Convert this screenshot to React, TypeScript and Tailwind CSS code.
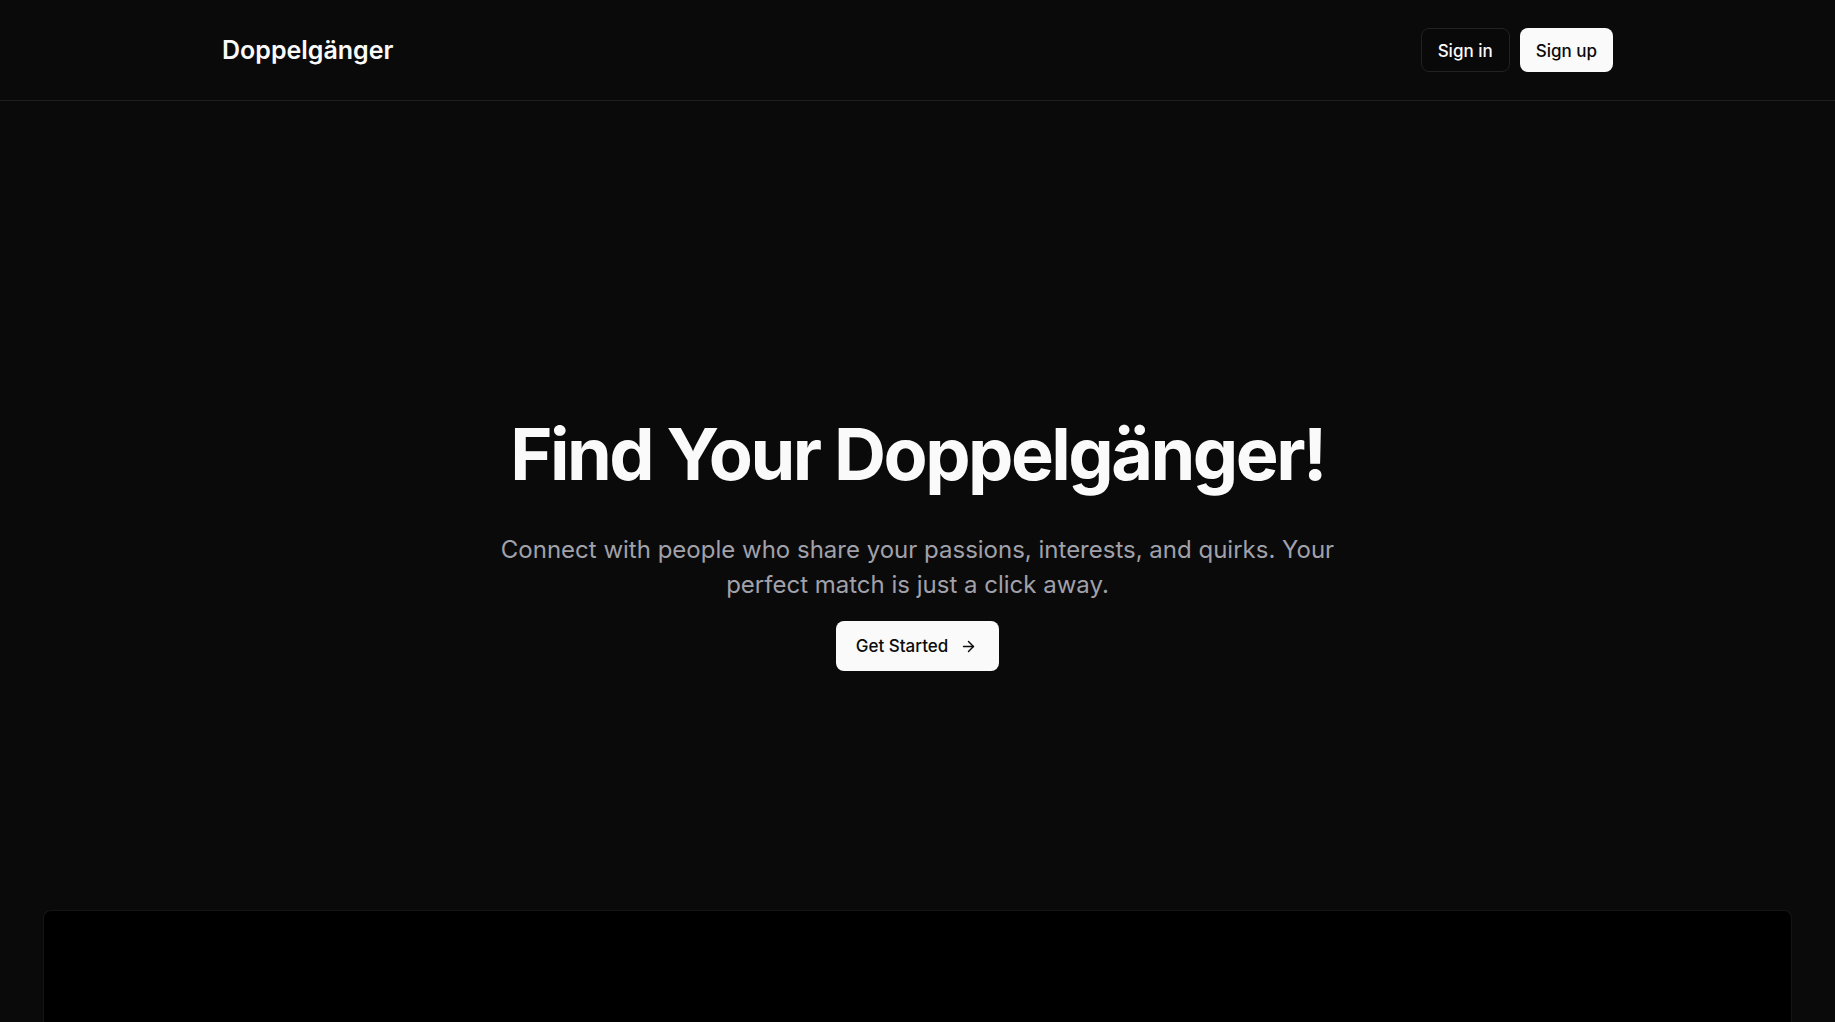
import React from "react";
import { ArrowRight } from "lucide-react";

export default function App() {
  return (
    <div
      className="h-screen overflow-hidden bg-[#0a0a0a] text-white flex flex-col"
      style={{ fontFamily: "Inter, 'Noto Sans', sans-serif" }}
    >
      <header className="h-[101px] shrink-0 border-b border-[#1f1f1f]">
        <div className="h-full px-[222px] flex items-center justify-between">
          <div className="text-[25px] font-semibold text-[#fafafa] translate-y-[1px]">Doppelgänger</div>
          <div className="flex items-center gap-[10px]">
            <button className="h-[44px] px-[16px] rounded-lg border border-[#222] bg-[#090909] text-[17px] font-medium text-[#fafafa]">
              <span className="inline-block translate-y-[2px]">Sign in</span>
            </button>
            <button className="h-[44px] px-[16px] rounded-lg bg-[#fafafa] text-[17px] font-medium text-[#0a0a0a]">
              <span className="inline-block translate-y-[2px]">Sign up</span>
            </button>
          </div>
        </div>
      </header>
      <main className="flex flex-col items-center pt-[317px]">
        <h1 className="text-[72px] leading-[72px] font-bold tracking-[-0.035em] text-[#fafafa]">
          Find Your Doppelgänger!
        </h1>
        <p className="mt-[42px] max-w-[870px] text-center text-[24px] leading-[35px] text-[#a1a1aa]">
          Connect with people who share your passions, interests, and quirks. Your perfect match is just a click away.
        </p>
        <button className="mt-[19px] h-[50px] pl-[20px] pr-[22px] rounded-lg bg-[#fafafa] text-[#0a0a0a] text-[17px] font-medium flex items-center gap-[12px]">
          <span className="translate-y-[1px]">Get Started</span>
          <ArrowRight size={17} strokeWidth={2} />
        </button>
      </main>
      <div className="mt-[239px] mx-[43px] h-[400px] shrink-0 rounded-t-lg bg-black border-t border-x border-[#151515]" />
    </div>
  );
}
